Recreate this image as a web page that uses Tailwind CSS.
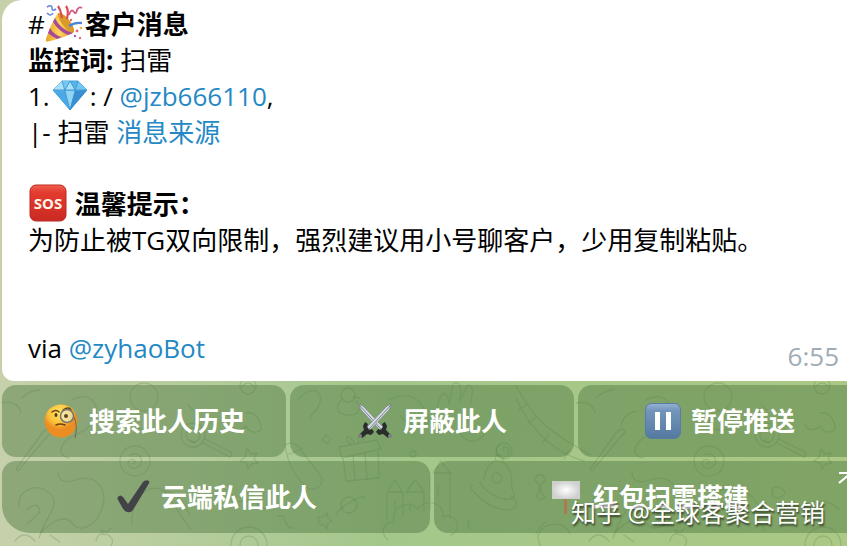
<!DOCTYPE html>
<html lang="zh-CN">
<head>
  <meta charset="UTF-8" />
  <meta name="viewport" content="width=device-width, initial-scale=1.0"/>
  <title>客户消息</title>
  <script src="https://cdn.jsdelivr.net/npm/@tailwindcss/browser@4"></script>
  <style>
    body { font-family: 'Open Sans', 'Noto Sans CJK SC', sans-serif; }
  </style>
</head>
<body class="overflow-hidden bg-[#b1cb96] text-[26px] leading-9 text-black">

  <main class="relative isolate min-h-screen overflow-hidden bg-linear-to-r from-[#c6d1ab] via-[#a3c78b] via-45% to-[#abc884]">

    <!-- Wallpaper doodles -->
    <svg class="absolute bottom-0 left-0 -z-10 h-[166px] w-full" viewBox="0 380 847 166" preserveAspectRatio="xMidYMid slice" fill="none" stroke="#517942" stroke-opacity=".24" stroke-width="1.3" stroke-linecap="round" stroke-linejoin="round" aria-hidden="true">
      <defs>
        <g id="doodles">
          <path d="M16 469 43 432q6-6 8 0L22 466q-4 7-6 3M47 426q2-12 15-15M2 403q16-3 19 10M22 398q8-8 18-8"/>
          <path d="M72 400c18-10 30 5 22 20s-22 12-30 23 1 14 5 15M58 472c0 13 12 10 21 7 17-4 28 9 24 26-6 22-23 28-30 19-8-11-21-2-32 8"/>
          <circle cx="135" cy="461" r="15"/><path d="M130 455c10-5 16 8 8 12s-13-4-8-7c5-2 7 3 3 4"/>
          <circle cx="144" cy="397" r="14"/><path d="M140 410c-9 15-4 20 8 20s14-8 9-18"/>
          <circle cx="193" cy="435" r="12"/><circle cx="193" cy="435" r="7"/><path d="m203 443 27 14M205 439l26 13q2 5-2 5"/>
          <circle cx="248" cy="386" r="8"/><path d="M242 386q6-6 12 0M246 413c10-2 15 8 15 17-7 4-12 2-15-4-6 6-13 4-15-2M247 449l4 5 6-1-3 6 4 4-7 1-3 5-2-6-6-2 5-4z"/>
          <path d="M19 506c-2-15 15-22 26-16 18 10 5 23-1 35l-5 13M26 510q12-10 14 2l-13 12M15 541q9-12 20 0m15-6 10 7M188 405l5 5m-3 30 5 3"/>
          <path d="M132 523c-2-25 18-42 32-32l27 39M164 491c15 1 20 13 26 24M198 489q8-6 13 4-4 7-12 4z"/>
          <circle cx="249" cy="545" r="18"/><circle cx="249" cy="545" r="9"/>
          <path d="M230 505q20-10 35 4M96 541q2-10 12-6 7 4 3 11M104 535l-3-5 6 2 4-4"/>
        </g>
      </defs>
      <use href="#doodles"/>
      <use href="#doodles" x="574"/>
      <path d="M299 399c12-15 26-8 20 6-3 10-11 9-8 14M285 445c9-5 14 1 19 9l16 21c6 11-5 17-14 12-10-10-19-25-21-42M287 455l16-7"/>
      <circle cx="348" cy="395" r="7"/><path d="M341 400c-8 10-2 15 9 15 9 0 13-8 6-14M354 397l6 1"/>
      <path d="m339 447 38-7 4 9-39 9zM343 457l3 24 33-3-1-29M353 456l2 24m10-27 2 26M355 444c-9-15-12-3-4 0m7-1c-1-15 15-15 4-2"/>
      <path d="m388 540c-8-7-6-18 6-18-4-15 15-23 24-13 8-12 27-6 25 8 14-5 20 13 8 18M387 519v-27l8-12 8 13v23M406 492l9-12 9 12v19M433 473l8-12 9 12v45M389 492h13m4 0h18m11-19h16M430 473v37M438 487v9m-28 7v7M395 501v8"/>
      <path d="M473 485q-5-1-1 5c11 13 23 20 37 20 9-1 10-7 2-14M480 482c4 9 19 19 31 17 5-2 4-6 0-12 3-12-3-24-11-26-9-2-15 8-16 19M496 461q-2-7 4-6 5 3 2 7"/>
      <circle cx="497" cy="478" r="5"/>
      <path d="M537 475h6l2 6-4 3v9l4 4-5 3-4-5 3-3v-8l-4-4zM516 386c22 41 42 50 75 69M516 398c16 37 43 56 68 63M526 405l-8 5m17 8-7 6m21 10-6 8m26 8-5 9"/>
      <path d="M437 407c5-18 10-17 12-3l4-20c7-4 9 2 7 17l8-16c6 1 5 8 2 19M388 400c25-12 36 3 41 21-11 7-22 5-29-6M459 427c3 18 20 18 27 5"/>
      <circle cx="504" cy="451" r="8"/><path d="M504 451c-5-6 8-6 4 3s-17-2-9-9M319 524l5 1 3 4 1-6 4-2-4-3-1-5-4 4-5 0z"/>
      <circle cx="349" cy="505" r="8"/><path d="M337 515c-2-6 29-24 28-16M541 546c-13-20 23-31 29-12M536 534c5-10 8-11 11-12M278 516c12-2 3 11 15 12M468 520c4 5-4 6 2 9"/>
      <circle cx="413" cy="454" r="3"/><path d="m326 435 5 4-4 5-5-4z"/>
    </svg>

    <!-- Content runs past the right edge of the window -->
    <div class="-mr-[15px] pl-0.5">

      <!-- Message bubble -->
      <article class="rounded-tl-[20px] rounded-bl-xl bg-white pt-1.5 pr-[23px] pb-[7px] pl-[26px]">
        <p>#<svg class="-mt-3 -mb-1 inline-block h-10 w-10 align-middle" viewBox="0 0 40 40" role="img" aria-label="🎉">
            <defs><linearGradient id="cone" x2="1"><stop stop-color="#e8a324"/><stop offset=".5" stop-color="#ffd45b"/><stop offset="1" stop-color="#d28b1c"/></linearGradient></defs>
            <path d="M13 10C8 17 4 27 1 36q-1 4 4 2c9-2 18-5 24-9 0-8-9-19-16-19" fill="url(#cone)"/>
            <path d="m10 15c3 7 10 13 18 15l-5 2C16 29 11 24 8 19zM5 25c3 5 7 8 12 9l-5 2C8 34 5 32 3 30z" fill="#a64b9c"/>
            <path d="M13 10c6-1 17 12 16 19-6 1-17-12-16-19" fill="#d99a2b"/>
            <path d="M17 15c-1-5-1-8-4-12M22 16q2-9-1-13" fill="none" stroke="#de4a54" stroke-width="2.2"/>
            <path d="M24 23q6-4 13-3" fill="none" stroke="#4b83dc" stroke-width="2.3"/>
            <path d="M2 4q5-3 5 1 0 4 4 1M2 10q4 4 6 0" fill="none" stroke="#6186db" stroke-width="1.6"/>
            <path d="M24 12q2-7 5-3 2 3 3-2 2-4 5-2" fill="none" stroke="#d65a83" stroke-width="1.8"/>
            <g fill="#e46b75"><circle cx="32" cy="28" r="1.4"/><circle cx="26" cy="17" r="1.2"/><circle cx="35" cy="35" r="1.2"/></g>
            <circle cx="36" cy="25" r="1.3" fill="#ebb447"/><circle cx="30" cy="33" r="1.2" fill="#9b5eb6"/>
          </svg><b>客户消息</b></p>
        <p><b>监控词:</b> 扫雷</p>
        <p>1.<svg class="-mt-3 -mb-1 inline-block h-9 w-10 align-middle" viewBox="0 0 40 36" role="img" aria-label="💎">
            <path d="m3 13 9-9h16l9 9-17 20z" fill="#55b6ed" stroke="#4aa1d8"/>
            <path d="m3 13 9-9 3 9zM15 13l5-9 5 9z" fill="#a9e1fb"/>
            <path d="m12 4 8 0-5 9zM25 13l3-9 9 9z" fill="#72c6f1"/>
            <path d="m3 13 12 2 5 18z" fill="#4da9e5"/><path d="m15 14 10 0-5 19z" fill="#91d4f6"/><path d="m25 14 12-1-17 20z" fill="#388fd1"/>
            <path d="M3 13h34M12 4l3 10 5 19 5-19 3-10M15 13l5-9 5 9" fill="none" stroke="#348bc2" stroke-width=".7"/>
          </svg>: / <a href="#" class="text-[#2488c4]">@jzb666110</a>,</p>
        <p>|- 扫雷 <a href="#" class="text-[#2488c4]">消息来源</a></p>
        <br>
        <p><svg class="-mt-3 -mb-1 inline-block h-10 w-10 align-middle" viewBox="0 0 40 40" role="img" aria-label="SOS">
            <defs><linearGradient id="sos" x2="0" y2="1"><stop stop-color="#f26050"/><stop offset=".2" stop-color="#e33c30"/><stop offset="1" stop-color="#ca2a22"/></linearGradient></defs>
            <rect x="2" y="2" width="36" height="36" rx="6" fill="url(#sos)" stroke="#bb2a22"/>
            <text x="20" y="26" text-anchor="middle" font-family="Noto Sans" font-size="15" font-weight="700" fill="#fff4e9">SOS</text>
          </svg> <b>温馨提示：</b></p>
        <p>为防止被TG双向限制，强烈建议用小号聊客户，少用复制粘贴。</p>
        <br>
        <br>
        <div class="flex items-start justify-between">
          <p>via <a href="#" class="text-[#2488c4]">@zyhaoBot</a></p>
          <time class="pt-2 text-[#a0acb6]">6:55</time>
        </div>
      </article>

      <!-- Inline keyboard -->
      <section class="space-y-1 pt-1 font-bold text-white">
        <div class="grid grid-cols-3 gap-1">
          <button class="flex h-[72px] items-center justify-center gap-2.5 rounded-[14px] bg-[#567d47]/50">
            <svg class="h-9 w-9" viewBox="0 0 36 36" aria-hidden="true">
              <defs><radialGradient id="face" cx=".45" cy=".25"><stop stop-color="#ffe66b"/><stop offset=".65" stop-color="#fdc036"/><stop offset="1" stop-color="#eb8d23"/></radialGradient></defs>
              <circle cx="18" cy="18" r="16.5" fill="url(#face)"/>
              <path d="M9 9q4-3 7 0M20 7q6-4 8 0M13 22q4-2 9 0" fill="none" stroke="#694019" stroke-width="1.5" stroke-linecap="round"/>
              <ellipse cx="13" cy="12" rx="1.5" ry="1.9" fill="#513516"/>
              <circle cx="24" cy="13" r="6.5" fill="#eee9be" fill-opacity=".7" stroke="#77766a" stroke-width="1.5"/>
              <circle cx="23" cy="13" r="2" fill="#5c4522"/><path d="M31 14q4 9 1 21" fill="none" stroke="#6d694a" stroke-width="1"/>
            </svg>
            <span>搜索此人历史</span>
          </button>
          <button class="flex h-[72px] items-center justify-center gap-2.5 rounded-[14px] bg-[#567d47]/50">
            <svg class="h-9 w-9" viewBox="0 0 36 36" aria-hidden="true">
              <g id="sword"><path d="m1 1 5 2 20 21-3 3L4 7z" fill="#d6dce3" stroke="#777f86" stroke-width=".7"/><path d="m2 2 22 24" stroke="#77808b"/><path d="m19 29 2-3 3 1 2-3-1-3 3-2 2 4-1 4 5 5-3 3-5-4-4 1z" fill="#292d2c"/><circle cx="33" cy="33" r="2" fill="#7c8080"/></g>
              <use href="#sword" transform="matrix(-1 0 0 1 36 0)"/>
            </svg>
            <span>屏蔽此人</span>
          </button>
          <button class="flex h-[72px] items-center justify-center gap-2.5 rounded-[14px] bg-[#567d47]/50">
            <svg class="h-9 w-9" viewBox="0 0 36 36" aria-hidden="true">
              <defs><linearGradient id="pause" x2="0" y2="1"><stop stop-color="#96b4d2"/><stop offset=".2" stop-color="#7395bd"/><stop offset="1" stop-color="#54799f"/></linearGradient></defs>
              <rect x=".5" y=".5" width="35" height="35" rx="6" fill="url(#pause)" stroke="#587ca4"/>
              <path d="M10 9h5v18h-5zM21 9h5v18h-5z" fill="#fff"/>
            </svg>
            <span>暂停推送</span>
          </button>
        </div>
        <div class="grid grid-cols-2 gap-1">
          <button class="flex h-[72px] items-center justify-center gap-2.5 rounded-[14px] rounded-bl-[28px] bg-[#567d47]/50">
            <svg class="h-9 w-9" viewBox="0 0 36 36" aria-hidden="true">
              <path d="M3 18q2-3 5 0l5 7L28 3q3-3 6-1 1 1-1 4L18 31q-2 3-6 2-3-1-5-5l-4-7q-1-2 0-3" fill="#414347"/>
            </svg>
            <span>云端私信此人</span>
          </button>
          <button class="relative flex h-[72px] items-center justify-center gap-2.5 rounded-[14px] bg-[#567d47]/50">
            <svg class="h-9 w-9" viewBox="0 0 36 36" aria-hidden="true">
              <defs><radialGradient id="board"><stop stop-color="#fff"/><stop offset="1" stop-color="#cfcfcf"/></radialGradient></defs>
              <path d="M17 18h3v17h-3z" fill="#ad794f"/><path d="M5 2h28v18H5z" fill="url(#board)"/>
            </svg>
            <span>红包扫雷搭建</span>
            <svg class="absolute top-2 right-2 h-4 w-4" viewBox="0 0 16 16" fill="none" stroke="#fff" stroke-width="2.2" aria-hidden="true"><path d="M1 4h12v11M13 4 1 14"/></svg>
          </button>
        </div>
      </section>
    </div>

    <!-- Watermark -->
    <p class="absolute right-[22px] bottom-4 text-[25px] leading-9 text-white [text-shadow:1px_2px_2px_rgb(0_0_0/0.6)]">知乎 @全球客聚合营销</p>
  </main>
</body>
</html>
